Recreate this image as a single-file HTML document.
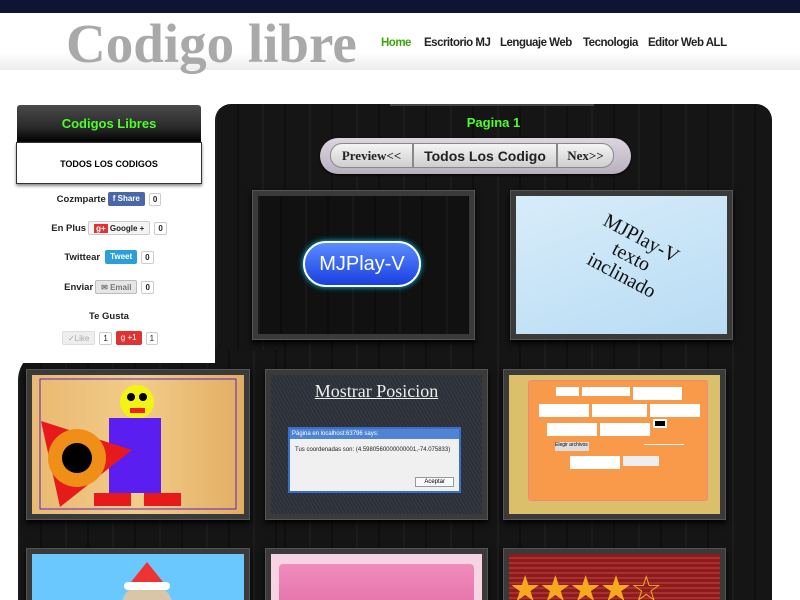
<!DOCTYPE html>
<html><head><meta charset="utf-8"><style>
*{margin:0;padding:0;box-sizing:border-box}
html,body{width:800px;height:600px;overflow:hidden}
body{position:relative;background:#fff;font-family:"Liberation Sans",sans-serif}
.abs{position:absolute}
.topbar{left:0;top:0;width:800px;height:13px;background:#0f1433}
.header{left:0;top:13px;width:800px;height:57px;background:linear-gradient(#fff 0%,#fff 70%,#ececec 100%)}
.logo{left:66px;top:16px;font-family:"Liberation Serif",serif;font-weight:bold;font-size:55px;line-height:56px;color:#a9a9a9;letter-spacing:0px}
.nav{top:37px;font-size:11.5px;font-weight:bold;color:#222;letter-spacing:-0.5px}
.dark{background:#151515;background-image:repeating-linear-gradient(90deg,rgba(255,255,255,0.03) 0 2px,transparent 2px 22px,rgba(0,0,0,0.3) 22px 24px,transparent 24px 47px)}
.main{left:215px;top:104px;width:557px;height:520px;border-radius:16px 16px 0 0}
.ext{left:18px;top:350px;width:260px;height:260px;border-radius:30px 0 0 0}
.side{left:0;top:100px;width:215px;height:263px;background:#fff}
.sidehead{left:17px;top:105px;width:184px;height:37px;background:linear-gradient(#4a4a4a,#2a2a2a 60%,#000);color:#4cff2a;font-weight:bold;font-size:13px;text-align:center;line-height:37px;border-radius:3px 3px 0 0}
.todos{left:16px;top:142px;width:186px;height:42px;border:1px solid #333;background:#fff;font-size:9px;font-weight:bold;text-align:center;line-height:42px;box-shadow:0 2px 3px #888}
.row{left:16px;width:186px;text-align:center;font-size:9.5px;font-weight:bold;color:#222;height:20px;line-height:16px}
.btn{display:inline-block;vertical-align:middle;height:14px;line-height:14px;font-size:8px;padding:0 5px;border-radius:2px;margin-left:2px}
.cnt{display:inline-block;vertical-align:middle;height:13px;line-height:12px;font-size:8px;border:1px solid #ccc;padding:0 3px;margin-left:4px;border-radius:2px;background:#fff}
.tile{background:#3a3a3a;border:1px solid #555;box-shadow:0 3px 6px #000;padding:5px}
.tile>div{width:100%;height:100%;position:relative;overflow:hidden}
.pag{left:320px;top:138px;width:311px;height:36px;border-radius:18px;background:linear-gradient(#ddd6e0,#b9b0bd);box-shadow:0 1px 2px #000}
.pb{top:143px;height:25px;background:linear-gradient(#f4f4f4,#cfcfcf);border:1px solid #888;text-align:center;line-height:24px;font-weight:bold;color:#222}
</style></head><body>
<div class="abs topbar"></div>
<div class="abs header"></div>
<div class="abs logo">Codigo libre</div>
<div class="abs nav" style="left:381px;color:#3aa60e">Home</div>
<div class="abs nav" style="left:424px">Escritorio MJ</div>
<div class="abs nav" style="left:500px">Lenguaje Web</div>
<div class="abs nav" style="left:583px">Tecnologia</div>
<div class="abs nav" style="left:648px">Editor Web ALL</div>

<div class="abs dark main"></div>
<div class="abs dark ext"></div>
<div class="abs side"></div>
<div class="abs" style="left:390px;top:104px;width:204px;height:2px;background:#444"></div>
<div class="abs" style="left:215px;top:115px;width:557px;text-align:center;color:#4cff2a;font-weight:bold;font-size:13px">Pagina 1</div>
<div class="abs pag"></div>
<div class="abs pb" style="left:330px;width:83px;border-radius:12px 0 0 12px;font-family:'Liberation Serif',serif;font-size:13px">Preview&lt;&lt;</div>
<div class="abs pb" style="left:413px;width:144px;font-size:14px">Todos Los Codigo</div>
<div class="abs pb" style="left:557px;width:57px;border-radius:0 12px 12px 0;font-family:'Liberation Serif',serif;font-size:13px">Nex&gt;&gt;</div>

<div class="abs sidehead">Codigos Libres</div>
<div class="abs todos">TODOS LOS CODIGOS</div>
<div class="abs row" style="top:192px">Cozmparte<span class="btn" style="background:#4a67a8;color:#fff">f Share</span><span class="cnt">0</span></div>
<div class="abs row" style="top:221px">En Plus<span class="btn" style="background:#f4f4f4;border:1px solid #ccc;color:#222"><b style="background:#d33;color:#fff;padding:0 2px">g+</b> Google +</span><span class="cnt">0</span></div>
<div class="abs row" style="top:250px">Twittear<span class="btn" style="background:#2c9fd8;color:#fff;margin-left:5px">Tweet</span><span class="cnt">0</span></div>
<div class="abs row" style="top:280px">Enviar<span class="btn" style="background:#e6e6e6;border:1px solid #bbb;color:#777">✉ Email</span><span class="cnt">0</span></div>
<div class="abs row" style="top:309px">Te Gusta</div>
<div class="abs row" style="top:331px;font-weight:normal"><span class="btn" style="background:#eee;color:#aaa;border:1px solid #ddd">✓Like</span><span class="cnt">1</span><span class="btn" style="background:#d33;color:#fff;margin-left:4px">g +1</span><span class="cnt">1</span></div>

<!-- row1 -->
<div class="abs tile" style="left:252px;top:190px;width:223px;height:150px"><div class="dark" style="background-color:#111">
<div class="abs" style="left:45px;top:45px;width:118px;height:46px;border-radius:23px;background:linear-gradient(#5a8cff,#1a3fe0);border:2px solid #fff;box-shadow:0 0 6px #0cf;color:#fff;font-size:20px;text-align:center;line-height:42px">MJPlay-V</div></div></div>
<div class="abs tile" style="left:510px;top:190px;width:223px;height:150px"><div style="background:linear-gradient(160deg,#d8ecfa,#b8dcf4)">
<div class="abs" style="left:40px;top:30px;width:150px;font-family:'Liberation Serif',serif;font-size:20px;line-height:21px;text-align:center;transform:rotate(28deg);color:#111">MJPlay-V<br>texto<br>inclinado</div></div></div>
<!-- row2 -->
<div class="abs tile" style="left:26px;top:369px;width:224px;height:151px"><div style="background:linear-gradient(90deg,#e9b970,#f2cc8a,#e2ad62)">
<svg width="212" height="139" class="abs" style="left:0;top:0"><rect x="8" y="4" width="196" height="130" fill="none" stroke="#5522cc"/><circle cx="105" cy="27" r="17" fill="#f3f315"/><circle cx="99" cy="22" r="4" fill="#000"/><circle cx="111" cy="22" r="4" fill="#000"/><rect x="98" y="33" width="15" height="5" fill="#e22"/><rect x="77" y="43" width="52" height="75" fill="#5a1ef0"/><polygon points="9,46 100,75 28,132" fill="#e61a1a"/><circle cx="45" cy="83" r="29" fill="#ef8f18"/><circle cx="45" cy="83" r="15" fill="#000"/><rect x="62" y="118" width="37" height="13" fill="#e61a1a"/><rect x="112" y="118" width="37" height="13" fill="#e61a1a"/></svg></div></div>
<div class="abs tile" style="left:265px;top:369px;width:223px;height:151px"><div style="background:#2b3038;background-image:repeating-linear-gradient(60deg,rgba(255,255,255,.06) 0 1px,transparent 1px 3px)">
<div class="abs" style="left:0;top:6px;width:100%;text-align:center;font-family:'Liberation Serif',serif;font-size:18px;color:#eee;text-decoration:underline">Mostrar Posicion</div>
<div class="abs" style="left:17px;top:52px;width:173px;height:66px;background:#f0f0f0;border:2px solid #3a6fc8;font-size:6px">
<div style="background:#4f83d4;color:#fff;height:10px;line-height:10px;padding-left:2px">Página en localhost:63796 says:</div>
<div style="padding:8px 5px;color:#222">Tus coordenadas son: (4.5980560000000001,-74.075833)</div>
<div class="abs" style="right:5px;bottom:4px;border:1px solid #999;padding:1px 8px;background:#fafafa">Aceptar</div></div></div></div>
<div class="abs tile" style="left:503px;top:369px;width:223px;height:151px"><div style="background:#dcbf6a">
<div class="abs" style="left:19px;top:5px;width:180px;height:121px;background:#f89a4a;border-radius:3px;border:1px solid #e88">
<div class="abs" style="left:27px;top:6px;width:23px;height:9px;background:#fff"></div><div class="abs" style="left:53px;top:6px;width:48px;height:9px;background:#fff"></div><div class="abs" style="left:104px;top:6px;width:49px;height:13px;background:#fff"></div>
<div class="abs" style="left:10px;top:23px;width:50px;height:13px;background:#fff"></div><div class="abs" style="left:63px;top:23px;width:55px;height:13px;background:#fff"></div><div class="abs" style="left:121px;top:23px;width:50px;height:13px;background:#fff"></div>
<div class="abs" style="left:18px;top:42px;width:50px;height:13px;background:#fff"></div><div class="abs" style="left:71px;top:42px;width:50px;height:13px;background:#fff"></div><div class="abs" style="left:124px;top:38px;width:14px;height:9px;background:#000;border:2px solid #fff"></div>
<div class="abs" style="left:26px;top:61px;width:34px;height:9px;background:#ddd;font-size:5px">Elegir archivos</div><div class="abs" style="left:115px;top:63px;width:40px;height:1px;background:#fff"></div>
<div class="abs" style="left:41px;top:75px;width:50px;height:13px;background:#fff"></div><div class="abs" style="left:94px;top:75px;width:36px;height:10px;background:#eee"></div></div></div></div>
<!-- row3 -->
<div class="abs tile" style="left:26px;top:548px;width:224px;height:80px"><div style="background:#6ac8ff">
<div class="abs" style="left:90px;top:30px;width:50px;height:40px;border-radius:50%;background:#d9c6a8"></div>
<div class="abs" style="left:95px;top:8px;width:0;height:0;border-left:20px solid transparent;border-right:20px solid transparent;border-bottom:25px solid #e33"></div>
<div class="abs" style="left:92px;top:28px;width:46px;height:8px;border-radius:4px;background:#fff"></div></div></div>
<div class="abs tile" style="left:265px;top:548px;width:223px;height:80px"><div style="background:#f6d4e4"><div class="abs" style="left:8px;top:10px;width:195px;height:60px;background:linear-gradient(#f08cbc,#e06aa4);border-radius:4px"></div></div></div>
<div class="abs tile" style="left:503px;top:548px;width:223px;height:80px"><div style="background:repeating-linear-gradient(#8c1c1c 0 3px,#a83030 3px 5px);color:#f5a820;font-size:36px;line-height:50px;padding-top:10px;letter-spacing:-2px">★★★★☆</div></div>
</body></html>
